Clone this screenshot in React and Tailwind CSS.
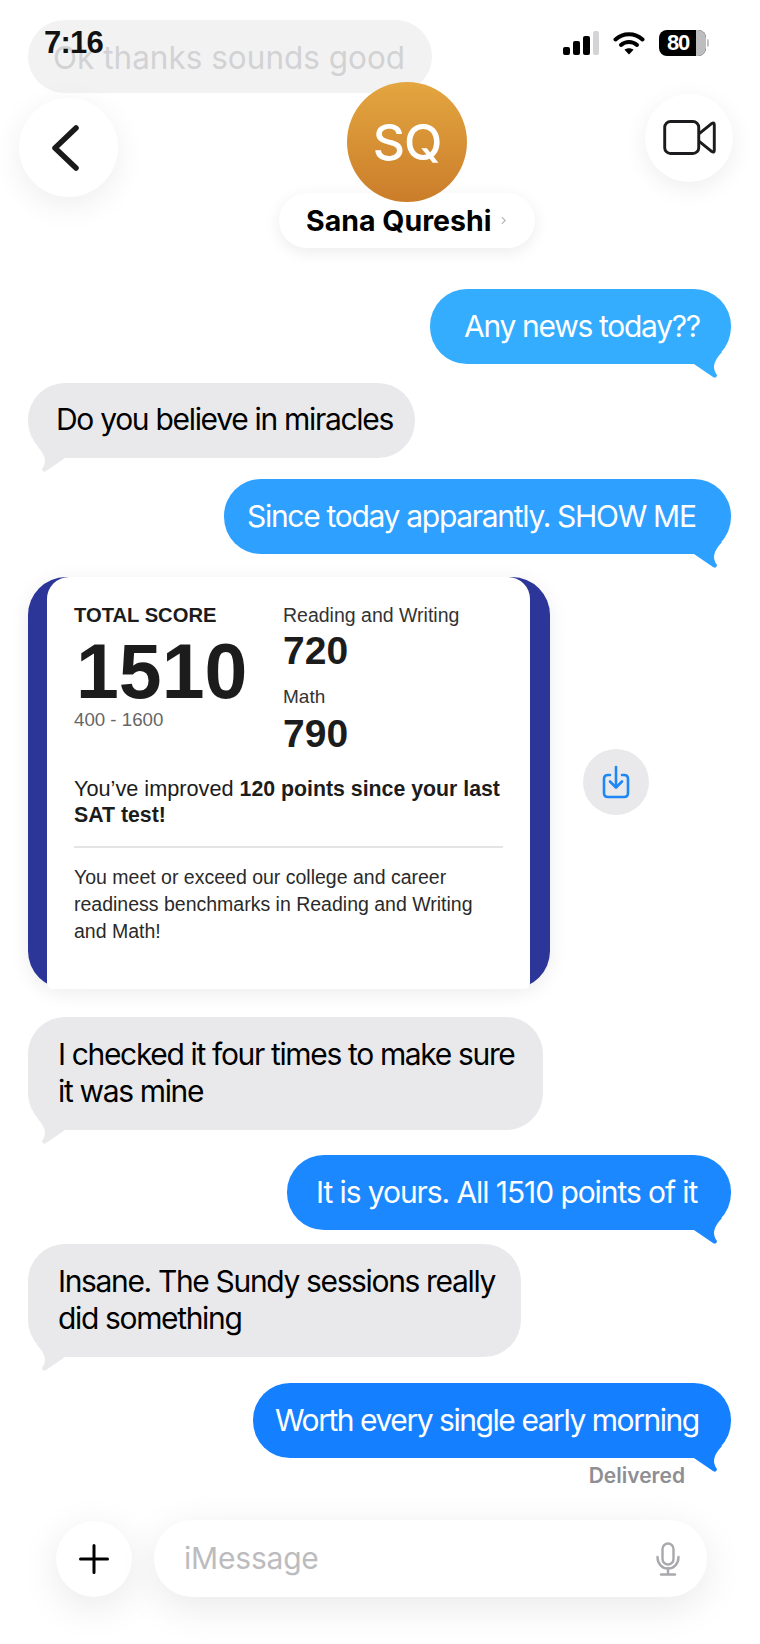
import React from "react";

const sf = "font-['Inter','Liberation_Sans',sans-serif]";
const helv = "font-['Liberation_Sans',Arial,sans-serif]";

function Tail({ color, left }) {
  return (
    <svg
      width="40"
      height="30"
      viewBox="0 0 40 30"
      className={`absolute bottom-[-16px] ${left ? "left-0 -scale-x-100" : "right-0"}`}
      fill={color}
    >
      <path d="M0 12 L22 27 Q25.5 29 26 25 C21 18 22 12 31 2 L20 0 Z" />
    </svg>
  );
}

function Sent({ color, bg, className, children }) {
  return (
    <div className={`relative self-end h-[75px] rounded-[37px] flex items-center pb-[1px] text-white ${bg} ${className}`}>
      <span className="whitespace-nowrap">{children}</span>
      <Tail color={color} />
    </div>
  );
}

function Received({ className, children }) {
  return (
    <div className={`relative self-start rounded-[37px] bg-[#e9e9eb] flex items-center pb-[2px] text-black ${className}`}>
      <span className="whitespace-pre-line">{children}</span>
      <Tail color="#e9e9eb" left />
    </div>
  );
}

function StatusBar() {
  return (
    <div className="absolute top-[26px] left-0 right-0 flex items-center justify-between pl-[44px] pr-[51px] z-20">
      <span className={`${helv} text-[31px] leading-[34px] font-bold text-[#111] tracking-[-0.8px]`}>7:16</span>
      <div className="flex items-center gap-[14px]">
        <svg width="36" height="26" viewBox="0 0 36 26">
          <rect x="0" y="17" width="7" height="8" rx="2" fill="#000" />
          <rect x="10" y="11" width="7" height="14" rx="2" fill="#000" />
          <rect x="20" y="6" width="7" height="19" rx="2" fill="#000" />
          <rect x="30" y="1" width="6" height="24" rx="2" fill="#d4d4d6" />
        </svg>
        <svg width="32" height="24" viewBox="0 0 32 24" fill="none" stroke="#000" strokeWidth="4" strokeLinecap="round">
          <path d="M2.5 8.5 C10 1.5 22 1.5 29.5 8.5" />
          <path d="M8 14 C12.5 10 19.5 10 24 14" />
          <path d="M16 23.5 L11.5 18.8 C14 16.8 18 16.8 20.5 18.8 Z" fill="#000" stroke="none" />
        </svg>
        <div className="flex items-center">
          <div className="relative w-[47px] h-[26px] rounded-[8px] bg-[#000] overflow-hidden flex items-center pl-[8px]">
            <div className="absolute right-0 top-0 bottom-0 w-[10px] bg-[#bdbdbf]" />
            <span className={`relative ${helv} text-[22px] font-bold text-white leading-none`}>80</span>
          </div>
          <div className="w-[2px] h-[8px] ml-[1px] rounded-r bg-[#c4c4c6]" />
        </div>
      </div>
    </div>
  );
}

function Header() {
  return (
    <>
      <div className="absolute left-[19px] top-[98px] w-[99px] h-[99px] rounded-full bg-white shadow-[0_8px_32px_rgba(0,0,0,0.07)] flex items-center justify-center">
        <svg width="30" height="46" viewBox="0 0 30 46" fill="none" stroke="#1a1a1a" strokeWidth="5.5" strokeLinecap="round" strokeLinejoin="round" className="-ml-[5px]">
          <path d="M25 3 L4 23 L25 43" />
        </svg>
      </div>
      <div className="absolute right-[27px] top-[94px] w-[88px] h-[88px] rounded-full bg-white shadow-[0_6px_24px_rgba(0,0,0,0.07)] flex items-center justify-center">
        <svg width="53" height="35" viewBox="0 0 54 36" fill="none" stroke="#1c1c1e" strokeWidth="3" strokeLinejoin="round" className="-mt-[2px]">
          <rect x="1.5" y="1.5" width="35" height="33" rx="6" />
          <path d="M37 14 L50 3.5 Q52.5 2 52.5 5 L52.5 31 Q52.5 34 50 32.5 L37 22" />
        </svg>
      </div>
      <div className="absolute left-[279px] top-[193px] w-[256px] h-[55px] rounded-[28px] bg-white shadow-[0_4px_16px_rgba(0,0,0,0.08)] flex items-center pl-[27px]">
        <span className={`${sf} text-[28.5px] font-bold text-black tracking-normal whitespace-nowrap`}>Sana Qureshi</span>
        <svg width="5" height="9" viewBox="0 0 6 10" fill="none" stroke="#b5b5b8" strokeWidth="1.4" className="ml-[10px]">
          <path d="M1 1 L5 5 L1 9" />
        </svg>
      </div>
      <div className="absolute left-[347px] top-[82px] w-[120px] h-[120px] rounded-full bg-gradient-to-b from-[#e3a640] to-[#cb7d2a] flex items-center justify-center">
        <span className={`${sf} text-[50px] font-medium text-white tracking-[-1px]`}>SQ</span>
      </div>
    </>
  );
}

function ScoreCard() {
  return (
    <div className="flex items-center mt-[23px]">
      <div className="w-[522px] h-[412px] rounded-[38px] bg-[#2c3598] pl-[19px] pr-[20px] shadow-[0_4px_20px_rgba(0,0,0,0.08)]">
        <div className={`${helv} h-full bg-white rounded-t-[22px] rounded-b-[6px] pl-[27px] pr-[24px] pt-[26px] text-[#1c1c1c] tracking-normal`}>
          <div className="flex">
            <div className="w-[209px]">
              <div className="text-[20.2px] leading-[24px] font-bold">TOTAL SCORE</div>
              <div className="text-[77px] leading-[74px] font-bold mt-[7px] ml-[2px]">1510</div>
              <div className="text-[18.7px] leading-[20px] text-[#666] mt-[2px]">400 - 1600</div>
            </div>
            <div>
              <div className="text-[19.5px] leading-[24px] text-[#333]">Reading and Writing</div>
              <div className="text-[39px] leading-[44px] font-bold mt-[2px]">720</div>
              <div className="text-[19px] leading-[24px] text-[#333] mt-[12px]">Math</div>
              <div className="text-[39px] leading-[44px] font-bold mt-[3px]">790</div>
            </div>
          </div>
          <p className="text-[21.7px] leading-[26px] mt-[20px] whitespace-pre-line">
            You’ve improved <b className="text-[21.3px]">120 points since your last{"\n"}SAT test!</b>
          </p>
          <div className="h-[2px] bg-[#e4e4e6] mt-[18px] w-[429px]" />
          <p className="text-[19.5px] leading-[27px] text-[#2a2a2a] mt-[16px] whitespace-pre-line">
            {"You meet or exceed our college and career\nreadiness benchmarks in Reading and Writing\nand Math!"}
          </p>
        </div>
      </div>
      <div className="w-[66px] h-[66px] ml-[33px] mt-[-2px] rounded-full bg-[#e9e9eb] flex items-center justify-center">
        <svg width="28" height="34" viewBox="0 0 28 34" fill="none" stroke="#1f86f5" strokeWidth="2.6" strokeLinecap="round" strokeLinejoin="round">
          <path d="M8 10 L6 10 Q2 10 2 14 L2 28 Q2 32 6 32 L22 32 Q26 32 26 28 L26 14 Q26 10 22 10 L20 10" />
          <path d="M14 2 L14 22" />
          <path d="M8 16.5 L14 22.5 L20 16.5" />
        </svg>
      </div>
    </div>
  );
}

function Composer() {
  return (
    <div className="flex items-center mt-[30px] pl-[56px]">
      <div className="w-[76px] h-[76px] rounded-full bg-white shadow-[0_10px_40px_rgba(0,0,0,0.09)] flex items-center justify-center">
        <svg width="30" height="30" viewBox="0 0 30 30" stroke="#000" strokeWidth="3" strokeLinecap="round">
          <path d="M15 1.5 L15 28.5 M1.5 15 L28.5 15" />
        </svg>
      </div>
      <div className="w-[553px] h-[77px] ml-[22px] rounded-[38px] bg-white shadow-[0_10px_40px_rgba(0,0,0,0.09)] flex items-center justify-between pl-[30px] pr-[27px]">
        <span className="text-[30px] text-[#bcbcbf] tracking-[-0.2px]">iMessage</span>
        <svg width="24" height="34" viewBox="0 0 24 34" fill="none" stroke="#a9a9ad" strokeWidth="2.4" strokeLinecap="round">
          <rect x="6.5" y="1.5" width="11" height="21" rx="5.5" />
          <path d="M1.5 15 C1.5 22 6 26.5 12 26.5 C18 26.5 22.5 22 22.5 15" />
          <path d="M12 26.5 L12 32.5 M5 32.5 L19 32.5" />
        </svg>
      </div>
    </div>
  );
}

export default function App() {
  return (
    <div className={`relative w-[760px] h-[1644px] overflow-hidden bg-white ${sf} text-[30px] leading-[37px] tracking-[-1.3px]`}>
      <StatusBar />
      <Header />
      <div className="flex flex-col pt-[20px] pl-[28px] pr-[29px]">
        <div className="self-start w-[404px] h-[73px] rounded-[37px] bg-[#f2f2f3] flex items-center pl-[25px] pt-[2px] text-[31.5px] tracking-normal text-[#d2d2d4]">
          Ok thanks sounds good
        </div>
        <Sent color="#34adff" bg="bg-[#34adff]" className="mt-[196px] w-[301px] pl-[34px]">Any news today??</Sent>
        <Received className="mt-[19px] h-[75px] w-[387px] pl-[28px]">Do you believe in miracles</Received>
        <Sent color="#2ea0ff" bg="bg-[#2ea0ff]" className="mt-[21px] w-[507px] pl-[23px]">Since today apparantly. SHOW ME</Sent>
        <ScoreCard />
        <Received className="mt-[28px] h-[113px] w-[515px] pl-[30px] tracking-[-1.35px]">{"I checked it four times to make sure\nit was mine"}</Received>
        <Sent color="#1b88ff" bg="bg-[#1b88ff]" className="mt-[25px] w-[444px] pl-[29px] tracking-[-1.08px]">It is yours. All 1510 points of it</Sent>
        <Received className="mt-[14px] h-[113px] w-[493px] pl-[30px] tracking-[-1.35px]">{"Insane. The Sundy sessions really\ndid something"}</Received>
        <Sent color="#1580ff" bg="bg-[#1580ff]" className="mt-[26px] w-[478px] pl-[22px] tracking-[-1.45px]">Worth every single early morning</Sent>
        <div className="self-end mr-[46px] mt-[4px] text-[21px] leading-[28px] font-semibold text-[#8e8e93] tracking-normal">Delivered</div>
      </div>
      <Composer />
    </div>
  );
}
